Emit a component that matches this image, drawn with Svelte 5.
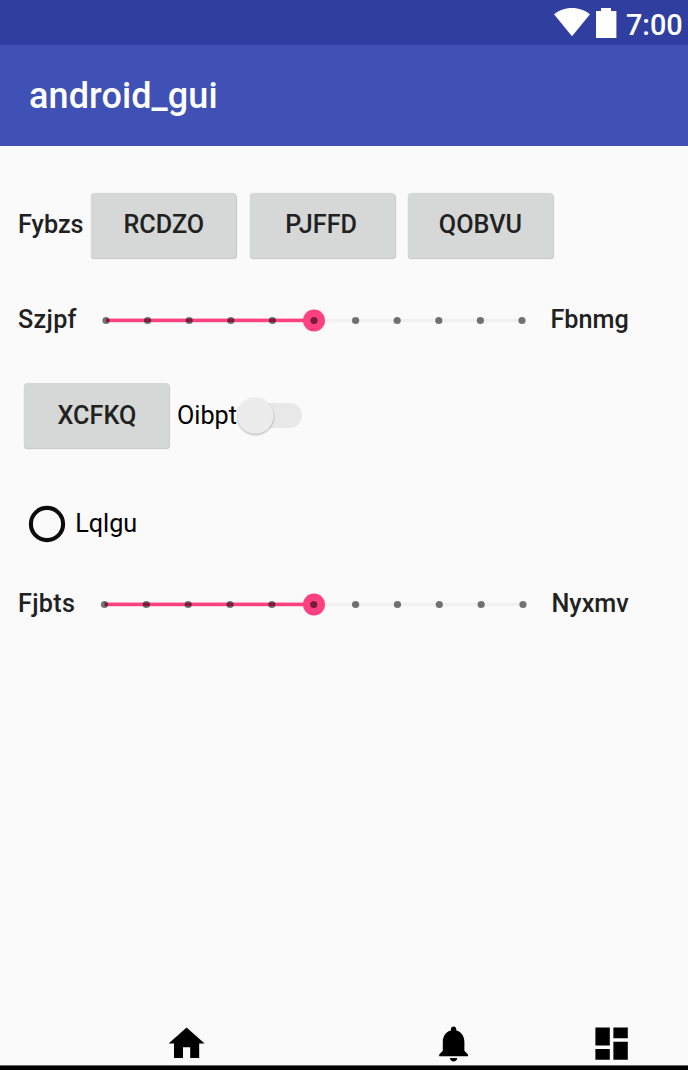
<script>
  const actions = ['RCDZO', 'PJFFD', 'QOBVU'];
  const sliders = {
    first: { start: 106, step: 41.6 },
    second: { start: 104.5, step: 41.85 }
  };
  const steps = Array.from({ length: 11 }, (_, i) => i);
</script>

{#snippet slider(s)}
  <svg class="slider" width="460" height="40" viewBox="84 0 460 40" role="img" aria-label="slider">
    <rect x={s.start} y="18.6" width={s.step * 10} height="3.6" fill="#f1f1f1" />
    <rect x={s.start} y="18.6" width={314 - s.start} height="3.6" fill="#ff4081" />
    <circle cx="314" cy="20.5" r="11" fill="#ff4081" />
    {#each steps as i}
      <circle cx={s.start + i * s.step} cy="20.5" r="3.6" fill="#000" fill-opacity="0.54" />
    {/each}
  </svg>
{/snippet}

<div class="screen">
  <div class="status">
    <svg class="wifi" width="38" height="30" viewBox="0 0 38 30"><path d="M1 6.2C11 -2.2 27 -2.2 37 6.2L19 28.3Z" fill="#fff" /></svg>
    <svg class="battery" width="22" height="32" viewBox="0 0 22 32"><path d="M6 1H16V4H21.4V31H1V4H6Z" fill="#fff" /></svg>
    <span class="time">7:00</span>
  </div>
  <header><h1>android_gui</h1></header>
  <main>
    <div class="row actions">
      <span class="label fy">Fybzs</span>
      {#each actions as name}<button>{name}</button>{/each}
    </div>
    <div class="row range">
      <span class="label lead">Szjpf</span>
      {@render slider(sliders.first)}
      <span class="label end">Fbnmg</span>
    </div>
    <div class="row toggle">
      <button>XCFKQ</button>
      <span class="plain">Oibpt</span>
      <svg width="70" height="48" viewBox="0 0 70 48">
        <rect x="6" y="12" width="59" height="25" rx="12.5" fill="#e8e8e8" />
        <circle class="thumb" cx="18.5" cy="24.8" r="18" fill="#ececec" />
      </svg>
    </div>
    <div class="row radio">
      <svg width="38" height="38" viewBox="0 0 38 38"><circle cx="19" cy="19" r="16.1" fill="none" stroke="#0c0c0c" stroke-width="4.1" /></svg>
      <span class="plain">Lqlgu</span>
    </div>
    <div class="row range second">
      <span class="label lead">Fjbts</span>
      {@render slider(sliders.second)}
      <span class="label end nyx">Nyxmv</span>
    </div>
  </main>
  <nav>
    <svg class="home" viewBox="0 0 24 24"><path d="M10 20v-6h4v6h5v-8h3L12 3 2 12h3v8z" /></svg>
    <svg class="bell" viewBox="0 0 24 24"><path d="M12 22c1.1 0 2-.9 2-2h-4c0 1.1.89 2 2 2zm6-6v-5c0-3.07-1.64-5.64-4.5-6.32V4c0-.83-.67-1.5-1.5-1.5s-1.5.67-1.5 1.5v.68C7.63 5.36 6 7.92 6 11v5l-2 2v1h16v-1l-2-2z" /></svg>
    <svg class="dash" viewBox="0 0 24 24"><path d="M3 13h8V3H3v10zm0 8h8v-6H3v6zm10 0h8V11h-8v10zm0-18v6h8V3h-8z" /></svg>
  </nav>
  <div class="edge"></div>
</div>

<style>
  :global(body) { margin: 0; background: #fafafa; }
  .screen {
    width: 688px; height: 1070px; overflow: hidden;
    display: flex; flex-direction: column; background: #fafafa;
    font-family: Roboto, sans-serif; font-size: 25.2px;
  }
  svg { display: block; flex: none; }
  .status { flex: none; height: 45px; background: #303f9f; display: flex; align-items: flex-start; color: #fff; padding-left: 552.7px; }
  .wifi { margin-top: 8px; }
  .battery { margin: 7px 0 0 4.6px; }
  .time { margin: 7px 0 0 8.7px; font-size: 28.8px; line-height: 36px; font-weight: 500; }
  header { flex: none; height: 101px; background: #3f51b5; box-sizing: border-box; padding-left: 29px; display: flex; align-items: center; }
  h1 { margin: 0; color: #fff; font-size: 36px; line-height: 44px; font-weight: 500; letter-spacing: .1px; }
  main { flex: 1; display: flex; flex-direction: column; }
  .row { display: flex; align-items: center; flex: none; white-space: nowrap; }
  .label { font-weight: 500; color: #212121; line-height: 30px; }
  .plain { color: #000; line-height: 30px; }
  button {
    flex: none; width: 145px; height: 65px; margin: 0; padding: 0 0 1px; border: 0; border-radius: 3.6px;
    background: #d6d8d7; color: #212121; font: 500 25.2px/30px Roboto, sans-serif;
    box-shadow: 0 0 1px rgba(0,0,0,.12), .5px 1px 1px rgba(0,0,0,.2);
  }
  .actions { margin-top: 47px; padding-left: 18px; height: 65px; gap: 13.3px; }
  .actions button:nth-of-type(2) { padding-right: 2px; }
  .fy { width: 60px; padding-bottom: 2px; }
  .range { margin-top: 42px; height: 40px; padding-left: 18px; }
  .lead { width: 66px; letter-spacing: .3px; }
  .end { padding-left: 6.5px; }
  .nyx { padding-left: 7.5px; }
  .toggle { margin-top: 43px; height: 65px; padding-left: 24.4px; }
  .toggle button { padding: 1px 0 0; }
  .toggle .plain { width: 60px; margin-left: 7.6px; padding-top: 1px; }
  .toggle svg { margin-top: -1px; }
  .thumb { filter: drop-shadow(0 1.5px 1px rgba(0,0,0,.3)); }
  .radio { margin-top: 57px; height: 38px; padding-left: 28px; gap: 9.2px; }
  .second { margin-top: 41px; }
  nav { flex: none; height: 42.6px; display: flex; padding-left: 165.2px; }
  nav svg { width: 43.2px; height: 43.2px; }
  .bell { margin-left: 223.4px; }
  .dash { margin-left: 115.3px; }
  .edge { flex: none; height: 4px; background: #000; border-top: 1px solid #666; }
</style>
